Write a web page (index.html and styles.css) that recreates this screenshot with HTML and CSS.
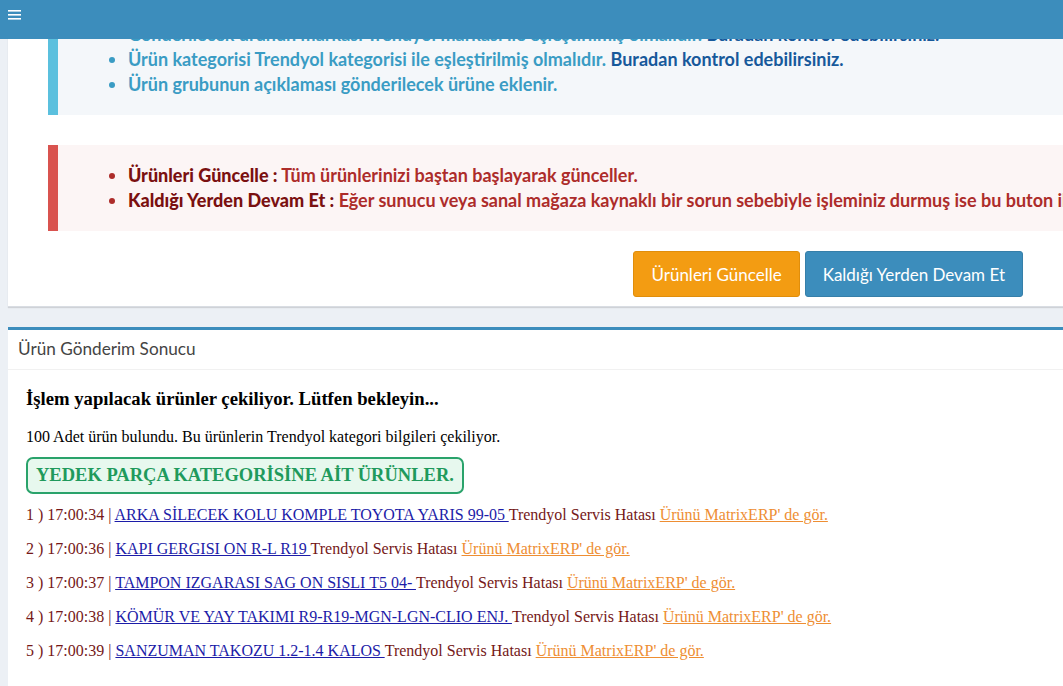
FILE: index.html
```html
<!DOCTYPE html>
<html lang="tr">
<head>
<meta charset="utf-8">
<title>Trendyol Ürün Gönderimi</title>
<link rel="stylesheet" href="styles.css">
</head>
<body>
<header class="topbar">
  <span class="menu-toggle">
    <svg width="13" height="10" viewBox="0 0 13 10"><rect x="0" y="0" width="13" height="1.6" fill="#fff"/><rect x="0" y="4" width="13" height="1.6" fill="#fff"/><rect x="0" y="8" width="13" height="1.6" fill="#fff"/></svg>
  </span>
</header>
<div class="wrapper">
  <section class="box box-plain">
    <div class="box-body">
      <div class="callout callout-info">
        <ul>
          <li>Gönderilecek ürünün markası Trendyol markası ile eşleştirilmiş olmalıdır. <a class="callout-link" href="#">Buradan kontrol edebilirsiniz.</a></li>
          <li>Ürün kategorisi Trendyol kategorisi ile eşleştirilmiş olmalıdır. <a class="callout-link" href="#">Buradan kontrol edebilirsiniz.</a></li>
          <li>Ürün grubunun açıklaması gönderilecek ürüne eklenir.</li>
        </ul>
      </div>
      <div class="callout callout-danger">
        <ul>
          <li><b class="label">Ürünleri Güncelle :</b> Tüm ürünlerinizi baştan başlayarak günceller.</li>
          <li><b class="label">Kaldığı Yerden Devam Et :</b> Eğer sunucu veya sanal mağaza kaynaklı bir sorun sebebiyle işleminiz durmuş ise bu buton ile</li>
        </ul>
      </div>
      <div class="actions">
        <button class="btn btn-warning">Ürünleri Güncelle</button>
        <button class="btn btn-primary">Kaldığı Yerden Devam Et</button>
      </div>
    </div>
  </section>

  <section class="box box-result">
    <div class="box-header">Ürün Gönderim Sonucu</div>
    <div class="result-body">
      <h3 class="result-title">İşlem yapılacak ürünler çekiliyor. Lütfen bekleyin...</h3>
      <p class="result-info">100 Adet ürün bulundu. Bu ürünlerin Trendyol kategori bilgileri çekiliyor.</p>
      <div class="category-tag">YEDEK PARÇA KATEGORİSİNE AİT ÜRÜNLER.</div>
      <div class="log">
        <div class="log-line">1 ) 17:00:34 | <a class="prod" href="#">ARKA SİLECEK KOLU KOMPLE TOYOTA YARIS 99-05 </a>Trendyol Servis Hatası <a class="erp" href="#">Ürünü MatrixERP' de gör.</a></div>
        <div class="log-line">2 ) 17:00:36 | <a class="prod" href="#">KAPI GERGISI ON R-L R19 </a>Trendyol Servis Hatası <a class="erp" href="#">Ürünü MatrixERP' de gör.</a></div>
        <div class="log-line">3 ) 17:00:37 | <a class="prod" href="#">TAMPON IZGARASI SAG ON SISLI T5 04- </a>Trendyol Servis Hatası <a class="erp" href="#">Ürünü MatrixERP' de gör.</a></div>
        <div class="log-line">4 ) 17:00:38 | <a class="prod" href="#">KÖMÜR VE YAY TAKIMI R9-R19-MGN-LGN-CLIO ENJ. </a>Trendyol Servis Hatası <a class="erp" href="#">Ürünü MatrixERP' de gör.</a></div>
        <div class="log-line">5 ) 17:00:39 | <a class="prod" href="#">SANZUMAN TAKOZU 1.2-1.4 KALOS </a>Trendyol Servis Hatası <a class="erp" href="#">Ürünü MatrixERP' de gör.</a></div>
      </div>
    </div>
  </section>
</div>
</body>
</html>
```

FILE: styles.css
```css
html, body {
  margin: 0;
  padding: 0;
  background: #ecf0f5;
  overflow: hidden;
  height: 686px;
}

.topbar {
  position: fixed;
  top: 0;
  left: 0;
  right: 0;
  height: 39px;
  background: #3c8dbc;
  z-index: 10;
}

.menu-toggle {
  display: block;
  padding: 10px 0 0 8px;
  line-height: 0;
}

.wrapper {
  padding-left: 8px;
  width: 1120px;
}

.box {
  background: #fff;
  font-family: "Lato", "Noto Sans", sans-serif;
}

.box-plain {
  box-shadow: 0 1px 1px rgba(0, 0, 0, 0.12);
  border-bottom: 1px solid #d9dde3;
}

.box-body {
  padding: 4px 0 9px 40px;
}

.callout {
  border-left: 10px solid;
  padding: 18px 20px 18px 30px;
  font-weight: 700;
  font-size: 18px;
  line-height: 25px;
}

.callout ul {
  margin: 0;
  padding-left: 40px;
}

.callout-info {
  border-color: #5bc0de;
  background: #f4f7fa;
  color: #3a9cc4;
  margin-bottom: 30px;
}

.callout-info li {
  white-space: nowrap;
}

.callout-link {
  color: #17599b;
  text-decoration: none;
}

.callout-danger {
  border-color: #d9534f;
  background: #fcf5f5;
  color: #ad2c2a;
}

.callout-danger li {
  white-space: nowrap;
}

.callout-danger .label {
  color: #7a1010;
}

.actions {
  display: flex;
  justify-content: flex-end;
  gap: 5px;
  width: 975px;
  margin-top: 20px;
}

.btn {
  height: 46px;
  border: 1px solid transparent;
  border-radius: 3px;
  color: #fff;
  font-family: "Lato", "Noto Sans", sans-serif;
  font-size: 17px;
  padding: 0 17px;
}

.btn-warning {
  background: #f39c12;
  border-color: #e08e0b;
}

.btn-primary {
  background: #3c8dbc;
  border-color: #367fa9;
}

.box-result {
  margin-top: 20px;
  border-top: 3px solid #3c8dbc;
}

.box-header {
  height: 39px;
  line-height: 38px;
  padding-left: 10px;
  border-bottom: 1px solid #f1f1f1;
  color: #444;
  font-size: 17.2px;
}

.result-body {
  padding: 18px 18px 30px 18px;
  font-family: "Liberation Serif", "Times New Roman", serif;
  color: #000;
}

.result-title {
  margin: 0;
  font-size: 18.7px;
  line-height: 22px;
  font-weight: 700;
}

.result-info {
  margin: 17px 0 0 0;
  font-size: 16px;
  line-height: 20px;
}

.category-tag {
  display: inline-block;
  margin-top: 10px;
  padding: 4px 8px;
  border: 2px solid #2aa36b;
  border-radius: 7px;
  background: #e7f8ee;
  color: #1f9a5c;
  font-weight: 700;
  font-size: 18.5px;
  line-height: 25px;
}

.log {
  margin-top: 4px;
}

.log-line {
  line-height: 34px;
  font-size: 16px;
  color: #751818;
  white-space: nowrap;
}

.prod {
  color: #1c1ca8;
}

.erp {
  color: #ee8e33;
}
```
